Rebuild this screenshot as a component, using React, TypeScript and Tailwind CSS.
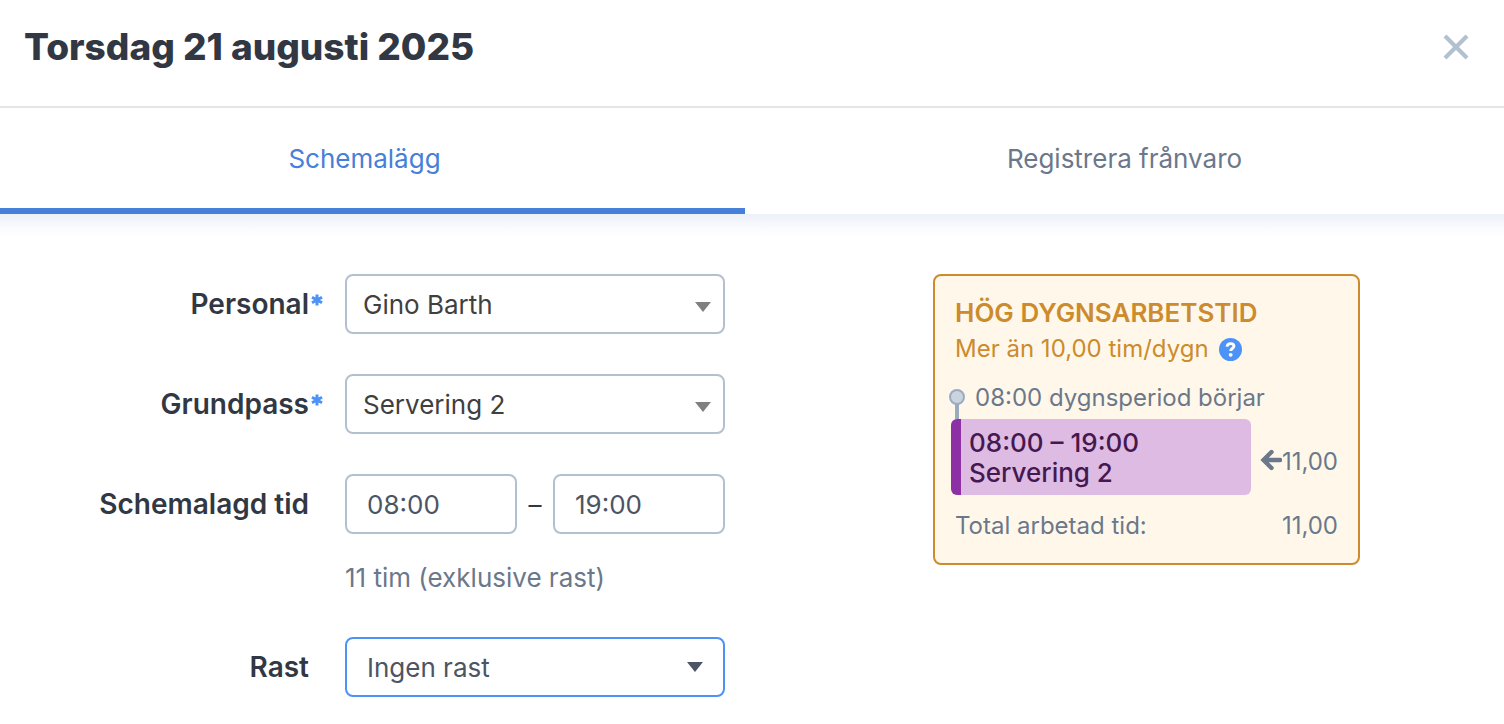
import { ReactNode, useState } from "react";

type FieldProps = {
	id: string;
	label: string;
	required?: boolean;
	children: ReactNode;
};

const Field = ({ id, label, required, children }: FieldProps) => {
	return (
		<div className="grid grid-cols-[1fr_380px]">
			<div className="flex h-[60px] items-center justify-end pr-[22px]">
				<label htmlFor={id} className="text-[28px] font-semibold text-[#323843]">
					{label}
				</label>
				<span className="flex w-[14px] justify-end">
					{required && (
						<svg viewBox="0 0 12 12" className="mb-2 size-3 shrink-0 text-[#4c92f7]" aria-hidden="true">
							<path
								d="M6 0.4v11.2M1 3.2l10 5.6M11 3.2l-10 5.6"
								stroke="currentColor"
								strokeWidth="3"
							/>
						</svg>
					)}
				</span>
			</div>
			<div>{children}</div>
		</div>
	);
};

type SelectProps = {
	id: string;
	options: string[];
	active?: boolean;
};

const Select = ({ id, options, active }: SelectProps) => {
	return (
		<div className="relative">
			<select
				id={id}
				className={
					active
						? "h-[60px] w-full appearance-none rounded-lg border-2 border-[#4c92f7] bg-white px-5 text-[26px] text-[#4b5563] outline-none"
						: "h-[60px] w-full appearance-none rounded-lg border-2 border-[#b3c0d0] bg-white px-4 text-[26px] text-[#404040] outline-none"
				}
			>
				{options.map((option) => (
					<option key={option}>{option}</option>
				))}
			</select>
			<svg
				viewBox="0 0 16 10"
				aria-hidden="true"
				className={
					active
						? "pointer-events-none absolute top-[25px] right-[22px] h-[10px] w-4 text-[#4b5563]"
						: "pointer-events-none absolute top-[28px] right-[14px] h-[10px] w-4 text-[#808080]"
				}
			>
				<path d="M0 0h16L8 10z" fill="currentColor" />
			</svg>
		</div>
	);
};

const timeInput =
	"h-[60px] w-[172px] rounded-lg border-2 border-[#b3c0d0] bg-white px-5 text-[26px] text-[#4b5563] outline-none";

const WorkTimeWarning = () => {
	return (
		<section className="rounded-lg border-2 border-[#cc8b2c] bg-[#fff8ea] pt-[19px] pr-5 pb-5 pl-4 text-2xl text-[#6b788b]">
			<div className="pl-1 text-[#cc8b2c]">
				<h2 className="text-[26px] leading-9 font-semibold">HÖG DYGNSARBETSTID</h2>
				<p className="flex items-center gap-[10px] leading-9">
					Mer än 10,00 tim/dygn
					<button type="button" aria-label="Hjälp">
						<svg viewBox="0 0 24 24" className="size-6">
							<circle cx="11.5" cy="12.5" r="11.5" fill="#4c92f7" />
							<path
								d="M8 9.6c.3-2 1.6-3 3.5-3 2 0 3.4 1 3.4 2.6 0 2.4-3.2 2.3-3.2 4.7"
								fill="none"
								stroke="#fff"
								strokeWidth="2.9"
							/>
							<circle cx="11.7" cy="17.8" r="1.9" fill="#fff" />
						</svg>
					</button>
				</p>
			</div>
			<div className="mt-4 -ml-1 flex h-9 items-start gap-[10px]">
				<svg viewBox="0 0 18 36" className="h-9 w-[18px] shrink-0" aria-hidden="true">
					<path d="M10 20v16" stroke="#9aabc0" strokeWidth="4" />
					<circle cx="10" cy="14" r="7" fill="#cbd3df" stroke="#9aabc0" strokeWidth="2" />
				</svg>
				<p className="leading-[30px]">08:00 dygnsperiod börjar</p>
			</div>
			<div className="flex items-center justify-between">
				<div className="h-[76px] w-[300px] rounded-md border-l-[10px] border-[#8d30a5] bg-[#ddbbe3] px-2 pt-[9px] text-[26px] leading-[30px] font-medium text-[#45184f]">
					<p>08:00 – 19:00</p>
					<p>Servering 2</p>
				</div>
				<div className="flex items-center pt-[10px]">
					<svg viewBox="0 0 22 22" className="mb-1 size-[22px]" aria-hidden="true">
						<path
							d="M20 11H4M11.5 3L3.5 11l8 8"
							fill="none"
							stroke="currentColor"
							strokeWidth="4.4"
							strokeLinecap="round"
						/>
					</svg>
					<span>11,00</span>
				</div>
			</div>
			<div className="mt-3 flex justify-between pl-1 leading-[38px] -mb-[2px]">
				<span>Total arbetad tid:</span>
				<span>11,00</span>
			</div>
		</section>
	);
};

const App = () => {
	const [tab, setTab] = useState("schedule");

	return (
		<div className="min-h-screen bg-white font-['Inter',sans-serif] text-[26px] text-[#6b788b]">
			<header className="flex h-[108px] items-start justify-between border-b-2 border-[#e6e6e6] px-6 pt-[23px]">
				<h1 className="text-[37px] leading-[48px] font-extrabold text-[#323843]">
					Torsdag 21 augusti 2025
				</h1>
				<button type="button" aria-label="Stäng" className="grid size-12 place-items-center">
					<svg viewBox="0 0 26 26" className="size-[26px]">
						<path d="M2 2l22 22M24 2L2 24" stroke="#b3c0d0" strokeWidth="4.2" />
					</svg>
				</button>
			</header>
			<nav className="grid grid-cols-[745fr_759fr]">
				<button
					type="button"
					onClick={() => setTab("schedule")}
					className={
						tab === "schedule"
							? "h-[106px] border-b-6 border-[#4680d8] pr-4 text-[#4680d8]"
							: "h-[106px] border-b-6 border-transparent pr-4"
					}
				>
					Schemalägg
				</button>
				<button
					type="button"
					onClick={() => setTab("absence")}
					className={
						tab === "absence"
							? "h-[106px] border-b-6 border-[#4680d8] text-[#4680d8]"
							: "h-[106px] border-b-6 border-transparent"
					}
				>
					Registrera frånvaro
				</button>
			</nav>
			<main className="grid grid-cols-[745fr_759fr] items-start bg-[linear-gradient(#ecf1f9,#fafbfe_14px,#fff_24px)] pt-[60px]">
				<form className="flex flex-col gap-10 pr-5">
					<Field id="personal" label="Personal" required>
						<Select id="personal" options={["Gino Barth"]} />
					</Field>
					<Field id="grundpass" label="Grundpass" required>
						<Select id="grundpass" options={["Servering 2"]} />
					</Field>
					<Field id="start" label="Schemalagd tid">
						<div className="flex items-center justify-between text-[#323843]">
							<input id="start" type="text" defaultValue="08:00" className={timeInput} />
							<span>–</span>
							<input
								type="text"
								aria-label="Sluttid"
								defaultValue="19:00"
								className={timeInput}
							/>
						</div>
						<p className="mt-6 leading-[39px]">11 tim (exklusive rast)</p>
					</Field>
					<Field id="rast" label="Rast">
						<Select id="rast" options={["Ingen rast"]} active />
					</Field>
				</form>
				<div className="pr-36 pl-[188px]">
					<WorkTimeWarning />
				</div>
			</main>
		</div>
	);
};

export default App;
